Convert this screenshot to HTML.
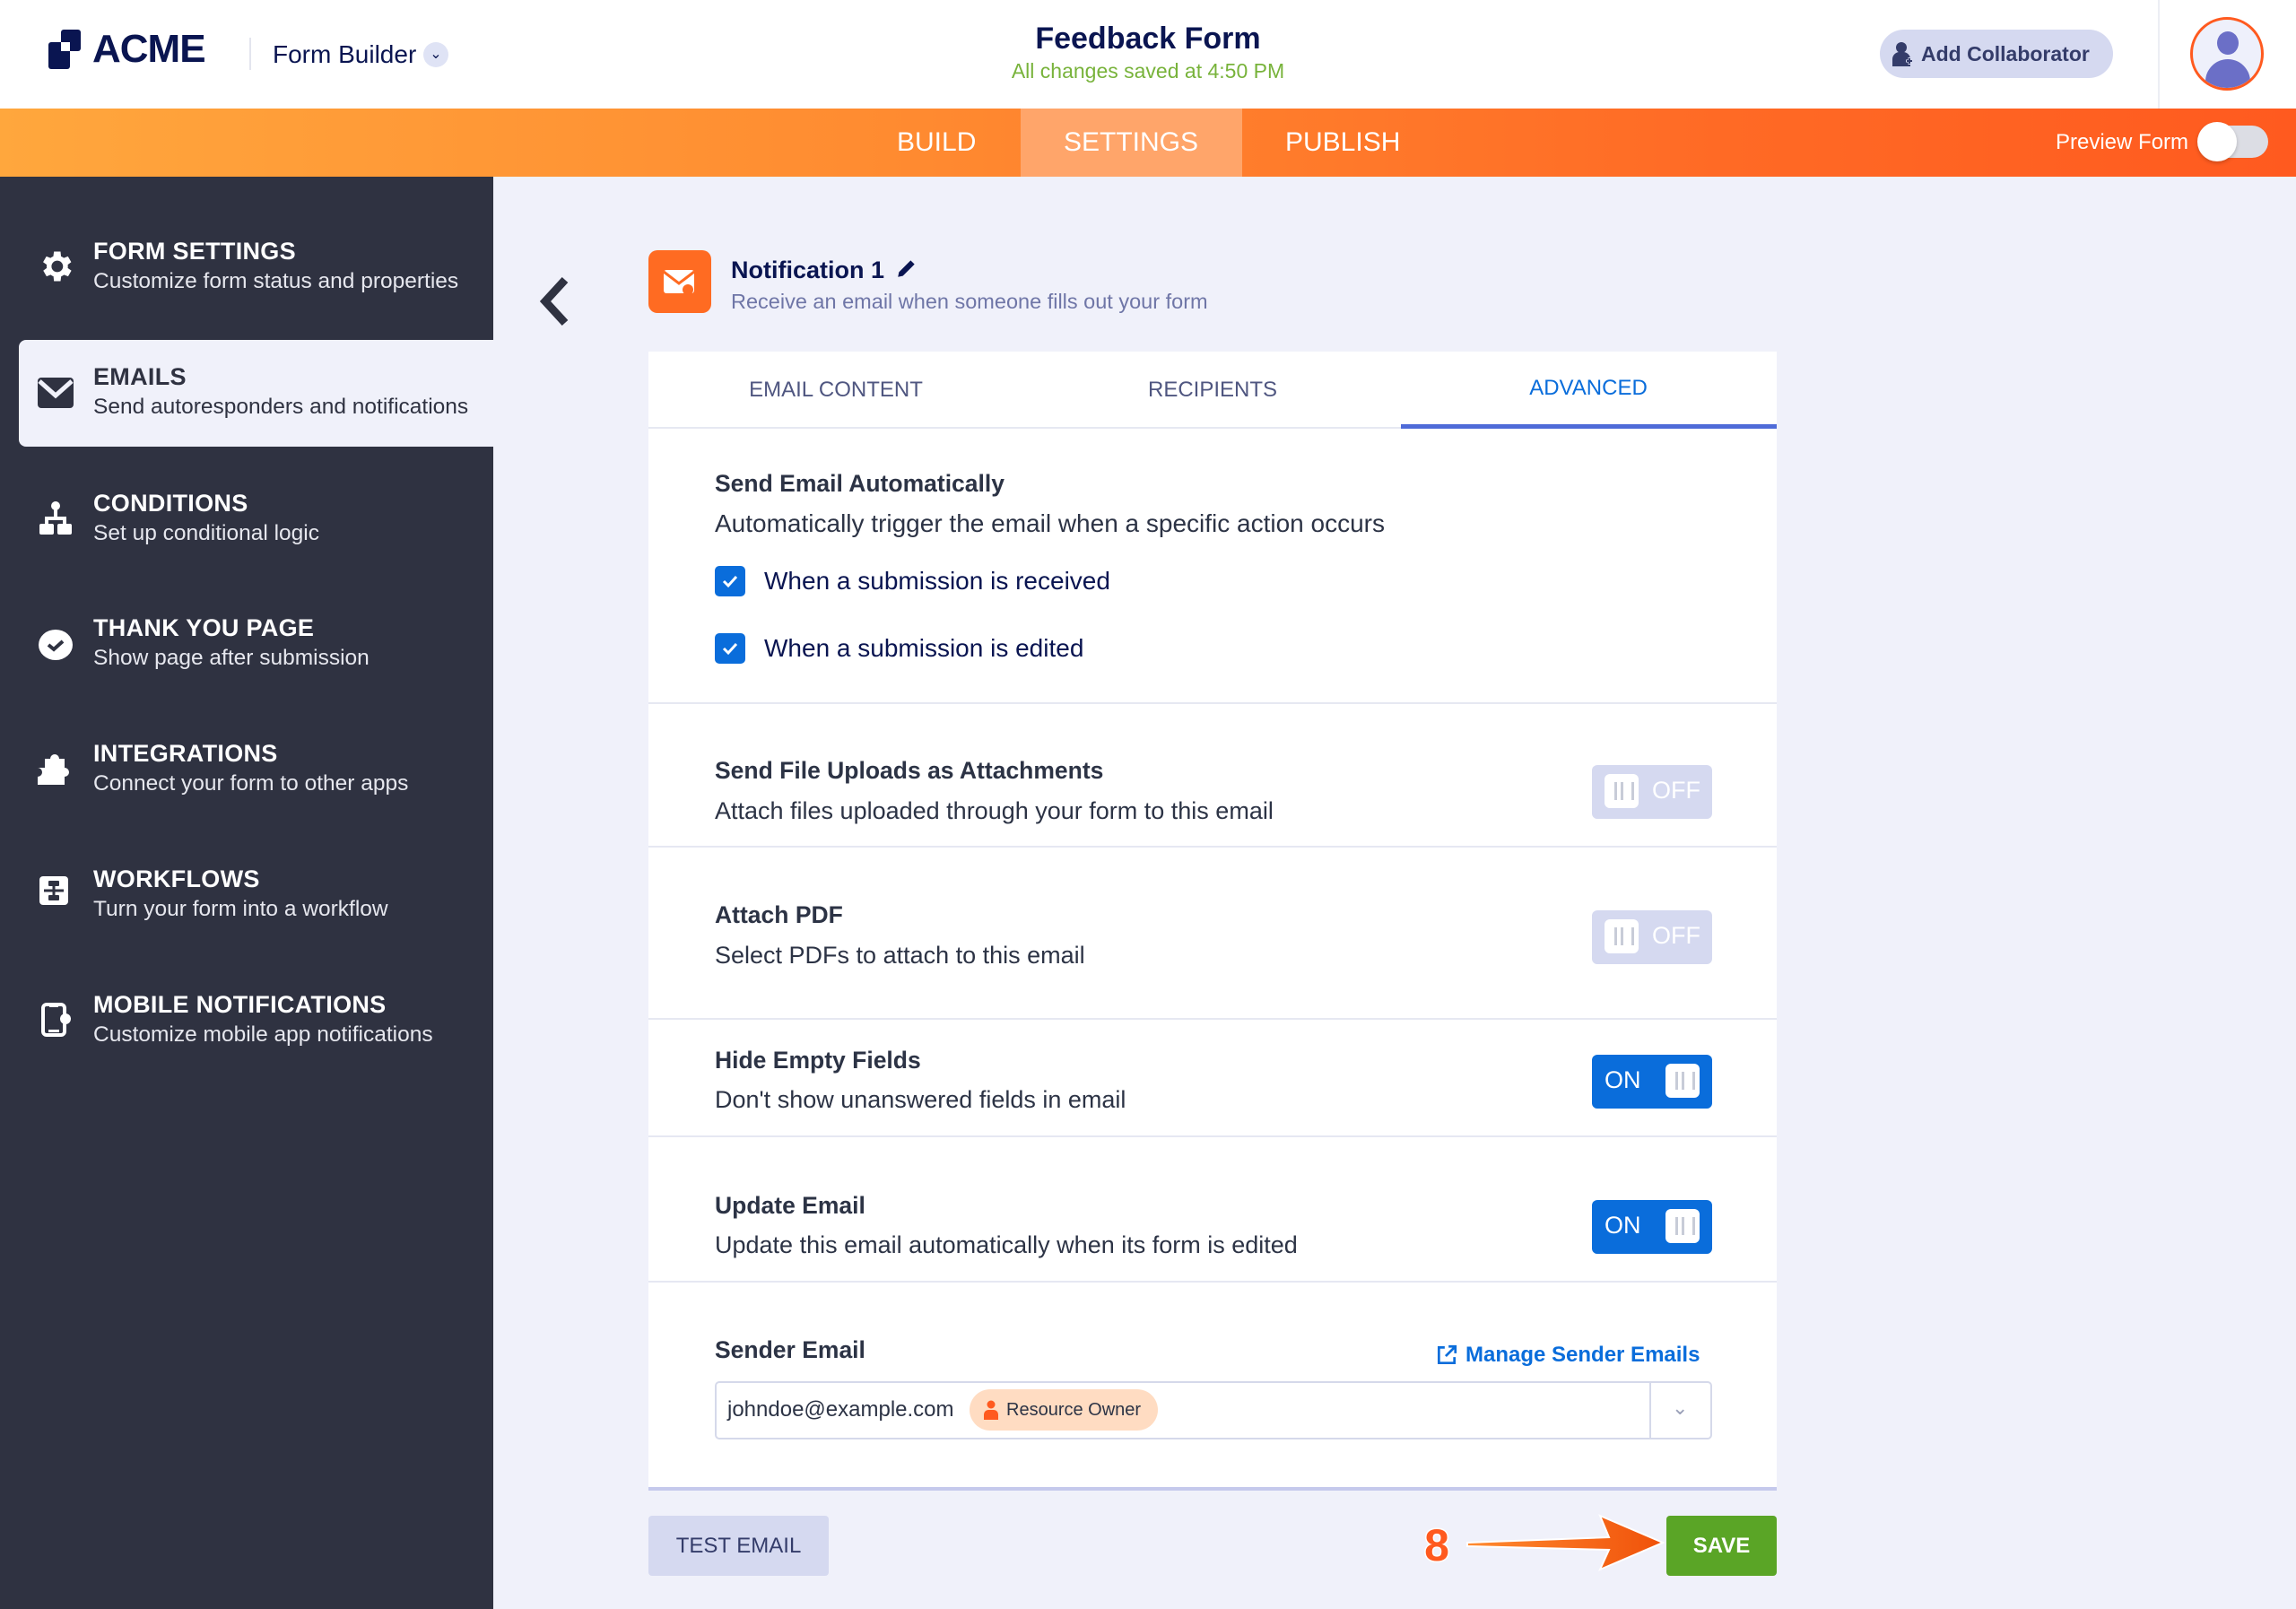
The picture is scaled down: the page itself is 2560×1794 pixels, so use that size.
<!DOCTYPE html>
<html><head><meta charset="utf-8"><style>
*{margin:0;padding:0;box-sizing:border-box}
body{width:2560px;height:1794px;overflow:hidden;background:#f0f1fa;font-family:"Liberation Sans",sans-serif;position:relative;color:#2c3345}
.a{position:absolute}
.hdr{left:0;top:0;width:2560px;height:121px;background:#fff}
.bar{left:0;top:121px;width:2560px;height:76px;background:linear-gradient(90deg,#ffa73d 0%,#ff8a30 40%,#ff6a25 75%,#ff5a1f 100%)}
.nav{color:#fff;font-size:30px;top:142px}
.side{left:0;top:197px;width:550px;height:1597px;background:#2f3241}
.it{left:104px;color:#fff}
.it b{display:block;font-size:27px;font-weight:bold;letter-spacing:.3px}
.it span{display:block;font-size:24.5px;margin-top:4px;color:#e6e7ee}
.card{left:723px;top:392px;width:1258px;height:1270px;background:#fff;border-bottom:4px solid #c5c9ec}
.sep{left:723px;width:1258px;height:2px;background:#e6e8f2}
.t{left:797px;font-size:26.5px;font-weight:bold;color:#2c3345}
.d{left:797px;font-size:27px;color:#2c3345}
.tg{left:1775px;width:134px;height:60px;border-radius:6px}
.off{background:#d5d9f0}
.on{background:#0a6ddb}
.kn{position:absolute;top:10px;width:38px;height:38px;background:#fff;border-radius:6px}
.kn:after{content:"";position:absolute;left:11px;top:9px;width:16px;height:20px;border-left:3px solid #c8ccd8;border-right:3px solid #c8ccd8}
.kn:before{content:"";position:absolute;left:18px;top:9px;width:3px;height:20px;background:#c8ccd8}
.tl{position:absolute;top:13px;font-size:27px;color:#fff}
.cb{left:797px;width:34px;height:34px;background:#0a6ddb;border-radius:5px}
</style></head><body>
<div class="a hdr"></div>
<svg class="a" style="left:54px;top:33px" width="46" height="46" viewBox="0 0 46 46"><rect x="14" y="0" width="22" height="24" rx="3" fill="#0a1551"/><rect x="0" y="14" width="24" height="30" rx="3" fill="#0a1551"/><rect x="14" y="14" width="10" height="10" fill="#fff"/></svg>
<div class="a" style="left:103px;top:30px;font-size:44px;font-weight:bold;color:#0a1551;letter-spacing:-1px">ACME</div>
<div class="a" style="left:278px;top:42px;width:2px;height:36px;background:#e3e5ee"></div>
<div class="a" style="left:304px;top:45px;font-size:28px;color:#0a1551">Form Builder</div>
<div class="a" style="left:472px;top:47px;width:28px;height:28px;border-radius:50%;background:#dfe3f5;color:#0a1551;font-size:16px;text-align:center;line-height:28px">&#8964;</div>
<div class="a" style="left:1080px;width:400px;top:24px;text-align:center;font-size:34px;font-weight:bold;color:#0a1551">Feedback Form</div>
<div class="a" style="left:1080px;width:400px;top:66px;text-align:center;font-size:23px;color:#78b33b">All changes saved at 4:50 PM</div>
<div class="a" style="left:2096px;top:33px;width:260px;height:54px;border-radius:27px;background:#d5d9f0;color:#343c6a;font-size:23px;font-weight:bold;line-height:54px;padding-left:46px">Add Collaborator</div>
<svg class="a" style="left:2110px;top:46px" width="24" height="28" viewBox="0 0 24 28"><circle cx="10" cy="7" r="6" fill="#343c6a"/><path d="M0 28v-8a8 8 0 0 1 8-8h4a8 8 0 0 1 8 8v8z" fill="#343c6a"/><path d="M19 18v8M15 22h8" stroke="#d5d9f0" stroke-width="3"/><path d="M19 19v6M16 22h6" stroke="#343c6a" stroke-width="2"/></svg>
<div class="a" style="left:2406px;top:0;width:2px;height:121px;background:#eceef4"></div>
<div class="a" style="left:2442px;top:19px;width:82px;height:82px;border-radius:50%;border:3px solid #ff5a1f;background:#eef0fb;overflow:hidden"><div style="position:absolute;left:27px;top:13px;width:24px;height:26px;border-radius:50%;background:#6b6fc7"></div><div style="position:absolute;left:14px;top:44px;width:50px;height:40px;border-radius:25px 25px 0 0;background:#6b6fc7"></div></div>
<div class="a bar"></div>
<div class="a" style="left:1138px;top:121px;width:247px;height:76px;background:#ffa56a"></div>
<div class="a nav" style="left:1000px">BUILD</div>
<div class="a nav" style="left:1186px">SETTINGS</div>
<div class="a nav" style="left:1433px">PUBLISH</div>
<div class="a" style="left:2292px;top:145px;font-size:24px;color:#fff">Preview Form</div>
<div class="a" style="left:2452px;top:140px;width:77px;height:36px;border-radius:18px;background:#dcdde4"></div>
<div class="a" style="left:2450px;top:136px;width:44px;height:44px;border-radius:50%;background:#fff;box-shadow:0 2px 4px rgba(0,0,0,.2)"></div>
<div class="a side"></div>
<div class="a" style="left:21px;top:379px;width:529px;height:119px;background:#f0f1fa;border-radius:8px 0 0 8px"></div>
<svg class="a" style="left:40px;top:273px" width="44" height="48" viewBox="0 0 24 24"><path fill="#fff" d="M19.4 13a7.5 7.5 0 0 0 0-2l2.1-1.6-2-3.5-2.5 1a7 7 0 0 0-1.7-1L15 3h-4l-.4 2.9a7 7 0 0 0-1.7 1l-2.5-1-2 3.5L6.6 11a7.5 7.5 0 0 0 0 2l-2.1 1.6 2 3.5 2.5-1a7 7 0 0 0 1.7 1L11 21h4l.4-2.9a7 7 0 0 0 1.7-1l2.5 1 2-3.5zM13 15.5a3.5 3.5 0 1 1 0-7 3.5 3.5 0 0 1 0 7z"/></svg>
<div class="a it" style="top:265px"><b>FORM SETTINGS</b><span>Customize form status and properties</span></div>
<svg class="a" style="left:42px;top:421px" width="40" height="34" viewBox="0 0 40 34"><rect width="40" height="34" rx="4" fill="#2f3241"/><path d="M2 4l18 16L38 4" stroke="#f0f1fa" stroke-width="5" fill="none"/></svg>
<div class="a it" style="top:405px"><b style="color:#2f3241">EMAILS</b><span style="color:#2f3241">Send autoresponders and notifications</span></div>
<svg class="a" style="left:44px;top:558px" width="36" height="40" viewBox="0 0 36 40"><circle cx="18" cy="6" r="5" fill="#fff"/><rect x="16" y="8" width="4" height="14" fill="#fff"/><rect x="6" y="18" width="24" height="4" fill="#fff"/><rect x="0" y="26" width="16" height="12" rx="2" fill="#fff"/><rect x="20" y="26" width="16" height="12" rx="2" fill="#fff"/><rect x="6" y="20" width="4" height="8" fill="#fff"/><rect x="26" y="20" width="4" height="8" fill="#fff"/></svg>
<div class="a it" style="top:546px"><b>CONDITIONS</b><span>Set up conditional logic</span></div>
<svg class="a" style="left:42px;top:700px" width="40" height="38" viewBox="0 0 40 38"><ellipse cx="20" cy="19" rx="19" ry="17" fill="#fff"/><path d="M12 19l6 5 10-9" stroke="#2f3241" stroke-width="4" fill="none"/></svg>
<div class="a it" style="top:685px"><b>THANK YOU PAGE</b><span>Show page after submission</span></div>
<svg class="a" style="left:40px;top:838px" width="40" height="38" viewBox="0 0 40 38"><path fill="#fff" d="M10 8h6a5 5 0 1 1 10 0h6v10a5 5 0 1 1 0 10v9H2v-9a5 5 0 1 0 0-10h8z"/></svg>
<div class="a it" style="top:825px"><b>INTEGRATIONS</b><span>Connect your form to other apps</span></div>
<svg class="a" style="left:44px;top:977px" width="32" height="32" viewBox="0 0 32 32"><rect width="32" height="32" rx="4" fill="#fff"/><rect x="10" y="5" width="12" height="6" rx="1" fill="#2f3241"/><rect x="10" y="21" width="12" height="6" rx="1" fill="#2f3241"/><path d="M16 11v10M5 16h22" stroke="#2f3241" stroke-width="3"/></svg>
<div class="a it" style="top:965px"><b>WORKFLOWS</b><span>Turn your form into a workflow</span></div>
<svg class="a" style="left:46px;top:1118px" width="34" height="40" viewBox="0 0 34 40"><rect x="2" y="2" width="24" height="34" rx="4" fill="none" stroke="#fff" stroke-width="4"/><rect x="9" y="0" width="10" height="5" fill="#fff"/><circle cx="27" cy="18" r="6" fill="#fff"/><rect x="8" y="30" width="12" height="3" fill="#fff"/></svg>
<div class="a it" style="top:1105px"><b>MOBILE NOTIFICATIONS</b><span>Customize mobile app notifications</span></div>
<svg class="a" style="left:600px;top:308px" width="36" height="56" viewBox="0 0 36 56"><path d="M30 4L8 28l22 24" stroke="#2f3241" stroke-width="9" fill="none"/></svg>
<div class="a" style="left:723px;top:279px;width:70px;height:70px;border-radius:10px;background:#ff6b22"></div>
<svg class="a" style="left:738px;top:297px" width="40" height="34" viewBox="0 0 40 34"><rect x="2" y="4" width="34" height="26" rx="3" fill="#fff"/><path d="M2 6l17 13L36 6" stroke="#ff6b22" stroke-width="3" fill="none"/><circle cx="29" cy="26" r="6" fill="#ff6b22"/></svg>
<div class="a" style="left:815px;top:286px;font-size:27px;font-weight:bold;color:#0a1551">Notification 1</div>
<svg class="a" style="left:998px;top:286px" width="26" height="26" viewBox="0 0 24 24"><path d="M3 21l1-5L16 4l4 4L8 20z" fill="#0a1551"/></svg>
<div class="a" style="left:815px;top:323px;font-size:23.5px;color:#6f76a7">Receive an email when someone fills out your form</div>
<div class="a card"></div>
<div class="a" style="left:723px;top:476px;width:1258px;height:2px;background:#e6e8f2"></div>
<div class="a" style="left:1562px;top:473px;width:419px;height:5px;background:#4f6bd8"></div>
<div class="a" style="left:832px;width:200px;top:421px;text-align:center;font-size:24px;color:#4f5680">EMAIL CONTENT</div>
<div class="a" style="left:1252px;width:200px;top:421px;text-align:center;font-size:24px;color:#4f5680">RECIPIENTS</div>
<div class="a" style="left:1671px;width:200px;top:419px;text-align:center;font-size:24px;color:#0a6ddb">ADVANCED</div>
<div class="a t" style="top:524px">Send Email Automatically</div>
<div class="a d" style="top:568px;font-size:28px">Automatically trigger the email when a specific action occurs</div>
<div class="a cb" style="top:631px"></div>
<div class="a cb" style="top:706px"></div>
<svg class="a" style="left:797px;top:631px" width="34" height="110" viewBox="0 0 34 110"><path d="M10 17l5 5 9-10M10 92l5 5 9-10" stroke="#fff" stroke-width="3" fill="none"/></svg>
<div class="a d" style="left:852px;top:632px;color:#0a1551;font-size:28px">When a submission is received</div>
<div class="a d" style="left:852px;top:707px;color:#0a1551;font-size:28px">When a submission is edited</div>
<div class="a sep" style="top:783px"></div>
<div class="a t" style="top:844px">Send File Uploads as Attachments</div>
<div class="a d" style="top:889px">Attach files uploaded through your form to this email</div>
<div class="a tg off" style="top:853px"><div class="kn" style="left:14px"></div><div class="tl" style="left:67px">OFF</div></div>
<div class="a sep" style="top:943px"></div>
<div class="a t" style="top:1005px">Attach PDF</div>
<div class="a d" style="top:1050px">Select PDFs to attach to this email</div>
<div class="a tg off" style="top:1015px"><div class="kn" style="left:14px"></div><div class="tl" style="left:67px">OFF</div></div>
<div class="a sep" style="top:1135px"></div>
<div class="a t" style="top:1167px">Hide Empty Fields</div>
<div class="a d" style="top:1211px">Don't show unanswered fields in email</div>
<div class="a tg on" style="top:1176px"><div class="tl" style="left:14px">ON</div><div class="kn" style="left:82px"></div></div>
<div class="a sep" style="top:1266px"></div>
<div class="a t" style="top:1329px">Update Email</div>
<div class="a d" style="top:1373px">Update this email automatically when its form is edited</div>
<div class="a tg on" style="top:1338px"><div class="tl" style="left:14px">ON</div><div class="kn" style="left:82px"></div></div>
<div class="a sep" style="top:1428px"></div>
<div class="a t" style="top:1490px">Sender Email</div>
<svg class="a" style="left:1600px;top:1498px" width="26" height="26" viewBox="0 0 24 24"><path d="M10 4H4v16h16v-6M14 3h7v7M21 3L11 13" stroke="#0a6ddb" stroke-width="2.5" fill="none"/></svg>
<div class="a" style="left:1634px;top:1497px;font-size:24px;font-weight:bold;color:#0a6ddb">Manage Sender Emails</div>
<div class="a" style="left:797px;top:1540px;width:1112px;height:65px;border:2px solid #d5d9ea;border-radius:5px;background:#fff"></div>
<div class="a" style="left:1839px;top:1541px;width:2px;height:63px;background:#d5d9ea"></div>
<div class="a" style="left:1864px;top:1557px;font-size:22px;color:#9aa0b8">&#8964;</div>
<div class="a" style="left:811px;top:1558px;font-size:24px;color:#2c3345">johndoe@example.com</div>
<div class="a" style="left:1081px;top:1549px;width:210px;height:46px;border-radius:23px;background:#ffdcc2;font-size:20px;color:#2c3345;line-height:46px;padding-left:41px">Resource Owner</div>
<svg class="a" style="left:1096px;top:1561px" width="18" height="22" viewBox="0 0 18 22"><circle cx="9" cy="5" r="4.5" fill="#ff5a1f"/><path d="M1 22v-6a5 5 0 0 1 5-5h6a5 5 0 0 1 5 5v6z" fill="#ff5a1f"/></svg>
<div class="a" style="left:723px;top:1690px;width:201px;height:67px;background:#d5d9f0;border-radius:4px;text-align:center;line-height:67px;font-size:24px;color:#343c6a">TEST EMAIL</div>
<div class="a" style="left:1858px;top:1690px;width:123px;height:67px;background:#5aa526;border-radius:4px;text-align:center;line-height:67px;font-size:24px;color:#fff;font-weight:bold">SAVE</div>
<svg class="a" style="left:1580px;top:1690px" width="44" height="64" viewBox="0 0 44 64"><text x="22" y="50" text-anchor="middle" font-family="Liberation Sans, sans-serif" font-weight="bold" font-size="50" fill="#ff5a1f" stroke="#fff" stroke-width="3" paint-order="stroke">8</text></svg>
<svg class="a" style="left:1634px;top:1688px" width="222" height="64" viewBox="0 0 222 64"><defs><linearGradient id="g" x1="0" x2="1"><stop offset="0" stop-color="#ff8a30"/><stop offset="1" stop-color="#f0520a"/></linearGradient></defs><path d="M2 32L160 26L150 2L220 32L150 62L160 40L2 36z" fill="url(#g)" stroke="#fff" stroke-width="2"/></svg>
</body></html>
